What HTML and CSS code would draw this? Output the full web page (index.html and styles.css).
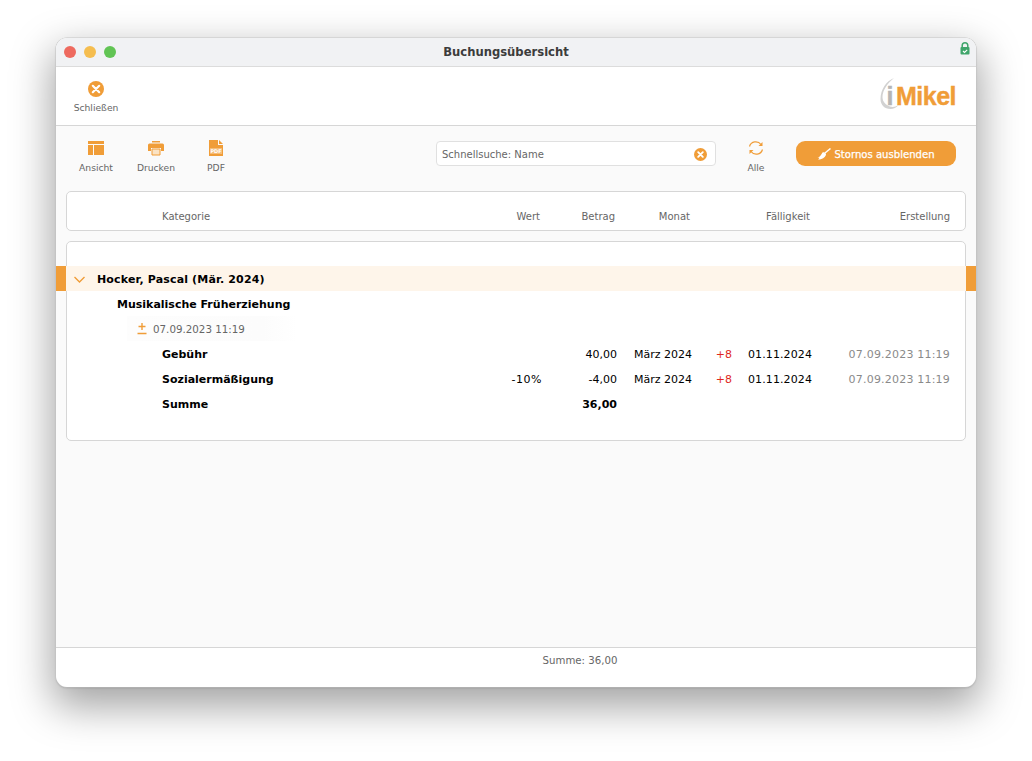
FILE: index.html
```html
<!DOCTYPE html>
<html lang="de">
<head>
  <meta charset="UTF-8">
  <title>Buchungsübersicht</title>
  <link rel="stylesheet" href="styles.css">
</head>
<body>
  <div class="window">
    <div class="titlebar">
      <div class="lights"><span class="red"></span><span class="yellow"></span><span class="green"></span></div>
      <div class="title">Buchungsübersicht</div>
      <svg class="lock" width="10" height="13" viewBox="0 0 10 13">
        <path d="M2.200 6V3.600a2.800 2.800 0 0 1 5.600 0V6" fill="none" stroke="#3fa56b" stroke-width="1.500"/>
        <rect x="0.500" y="5" width="9" height="7.500" rx="1" fill="#3fa56b"/>
        <path d="M3 9l1.500 1.400L7.200 7.800" fill="none" stroke="#fff" stroke-width="1.100"/>
      </svg>
    </div>

    <div class="topbar">
      <div class="tool close-tool">
        <svg width="18" height="18" viewBox="0 0 18 18">
          <circle cx="9" cy="9" r="8" fill="#f09d38"/>
          <path d="M5.800 5.800l6.400 6.400M12.200 5.800l-6.400 6.400" stroke="#fff" stroke-width="2.200" stroke-linecap="round"/>
        </svg>
        <span>Schließen</span>
      </div>
      <div class="logo">
        <svg class="swoosh" width="26" height="36" viewBox="0 0 26 36">
          <path d="M15 0C7 3 1.500 12 1.500 21c0 6 4 10 10 10 3 0 6-1.500 8-4-3 2-6 2.500-8.500 1.500C7 27 3.500 24 3.500 19 3.500 12 9 5 15 0z" fill="#d2d2d2"/>
        </svg>
        <span class="logo-i">i</span><span class="logo-text">Mikel</span>
      </div>
    </div>

    <div class="content">
      <div class="actions">
        <div class="tools">
          <div class="tool">
            <svg width="18" height="16" viewBox="0 0 18 16">
              <path d="M1 1h16v3H1zM1 5h5v10H1zM7 5h10v10H7z" fill="#f09d38"/>
            </svg>
            <span>Ansicht</span>
          </div>
          <div class="tool">
            <svg width="18" height="16" viewBox="0 0 18 16">
              <path d="M5 1h8v1.500H5zM2.500 3.500h13A1.500 1.500 0 0 1 17 5v6h-3V8H4v3H1V5a1.500 1.500 0 0 1 1.500-1.500z" fill="#f09d38"/>
              <path d="M5 9h8v6H5z" fill="#fbe3c4" stroke="#f09d38"/>
            </svg>
            <span>Drucken</span>
          </div>
          <div class="tool">
            <svg width="18" height="16" viewBox="0 0 18 16">
              <path d="M2 0h9v5h5v11H2z" fill="#f09d38"/>
              <path d="M12 0l4 4h-4z" fill="#f09d38"/>
              <rect x="3" y="8" width="12" height="6" fill="#f6bd78"/>
              <text x="9" y="13" class="pdf-mark">PDF</text>
            </svg>
            <span>PDF</span>
          </div>
        </div>
        <div class="search">
          <span>Schnellsuche: Name</span>
          <svg width="13" height="13" viewBox="0 0 18 18">
            <circle cx="9" cy="9" r="9" fill="#f09d38"/>
            <path d="M5.800 5.800l6.400 6.400M12.200 5.800l-6.400 6.400" stroke="#fff" stroke-width="2.600" stroke-linecap="round"/>
          </svg>
        </div>
        <div class="tool all-tool">
          <svg width="18" height="16" viewBox="0 0 18 16">
            <path d="M2.500 6.500A6.500 6.500 0 0 1 14 4.500M15.500 9.500A6.500 6.500 0 0 1 4 11.500" fill="none" stroke="#f09d38" stroke-width="1.200"/>
            <path d="M15.500 2v4h-4zM2.500 14v-4h4z" fill="#f09d38"/>
          </svg>
          <span>Alle</span>
        </div>
        <button class="storno">
          <svg width="14" height="12" viewBox="0 0 14 12">
            <path d="M13.500 0.500L8 5" stroke="#fff" stroke-width="1.500"/>
            <path d="M5.500 4.500c2-.8 3.500.5 3.500 2.200C8 9.500 5 11.500 1 11.500c1-.7 1.300-1.300 1.300-1.800-.6.200-1.200.2-1.800.1C3 8.800 4 7 5.500 4.500z" fill="#fff"/>
          </svg>
          Stornos ausblenden
        </button>
      </div>

      <div class="panel header-panel">
        <div class="row head">
          <span class="c-name">Kategorie</span>
          <span>Wert</span>
          <span>Betrag</span>
          <span>Monat</span>
          <span>Fälligkeit</span>
          <span>Erstellung</span>
        </div>
      </div>

      <div class="panel list-panel">
        <div class="group">
          <svg class="chevron" width="11" height="7" viewBox="0 0 11 7">
            <path d="M0.500 1l5 5 5-5" fill="none" stroke="#f09d38" stroke-width="1.400"/>
          </svg>
          Hocker, Pascal (Mär. 2024)
        </div>
        <div class="course">Musikalische Früherziehung</div>
        <div class="stamp">
          <svg width="10" height="13" viewBox="0 0 10 13">
            <path d="M5 1v7M1.500 4.500h7M0.500 11.500h9" stroke="#f09d38" stroke-width="1.400"/>
          </svg>
          07.09.2023 11:19
        </div>
        <div class="row data">
          <span class="c-name strong">Gebühr</span>
          <span></span>
          <span>40,00</span>
          <span>März 2024</span>
          <span class="c-plus">+8</span>
          <span class="c-date">01.11.2024</span>
          <span class="c-erst">07.09.2023 11:19</span>
        </div>
        <div class="row data">
          <span class="c-name strong">Sozialermäßigung</span>
          <span class="c-wert">-10%</span>
          <span>-4,00</span>
          <span>März 2024</span>
          <span class="c-plus">+8</span>
          <span class="c-date">01.11.2024</span>
          <span class="c-erst">07.09.2023 11:19</span>
        </div>
        <div class="row data">
          <span class="c-name strong">Summe</span>
          <span></span>
          <span class="strong">36,00</span>
        </div>
      </div>
    </div>

    <div class="footer">Summe: 36,00</div>
  </div>
</body>
</html>
```

FILE: styles.css
```css
html, body {
  height: 100%;
}
body {
  margin: 0;
  background: #fff;
  font-family: "DejaVu Sans", sans-serif;
  font-size: 11px;
  color: #000;
  padding: 38px 56px 0;
  box-sizing: border-box;
  overflow: hidden;
}
.window {
  width: 920px;
  height: 649px;
  border-radius: 11px;
  overflow: hidden;
  display: flex;
  flex-direction: column;
  background: #fff;
  box-shadow: 0 0 0 0.5px #c8c8c8, 0 1px 2px rgba(0, 0, 0, 0.2), 0 16px 40px 4px rgba(0, 0, 0, 0.36);
}
.titlebar {
  height: 29px;
  flex: none;
  background: #f1f2f4;
  border-bottom: 1px solid #dcdcdc;
  box-sizing: border-box;
  display: flex;
  align-items: center;
  position: relative;
}
.lights {
  display: flex;
  gap: 8px;
  padding-left: 8px;
}
.lights span {
  width: 12px;
  height: 12px;
  border-radius: 50%;
}
.lights .red { background: #ee6a5f; }
.lights .yellow { background: #f5bd4f; }
.lights .green { background: #61c454; }
.title {
  position: absolute;
  left: 0;
  right: 20px;
  text-align: center;
  font-size: 11.600px;
  font-weight: bold;
  color: #3c3c3c;
}
.lock {
  position: absolute;
  right: 6px;
  top: 4px;
}
.topbar {
  height: 59px;
  flex: none;
  display: flex;
  justify-content: space-between;
  border-bottom: 1px solid #d6d6d6;
  box-sizing: border-box;
}
.tool {
  display: flex;
  flex-direction: column;
  align-items: center;
  color: #666;
  font-size: 9.200px;
}
.close-tool {
  width: 80px;
  padding-top: 13px;
  gap: 4px;
}
.logo {
  position: relative;
  width: 78px;
  margin: 11px 20px 0 0;
  height: 36px;
  display: flex;
  align-items: center;
  justify-content: flex-end;
  font-family: "Liberation Sans", sans-serif;
  font-weight: bold;
  font-size: 25px;
  letter-spacing: -0.5px;
  -webkit-text-stroke: 0.4px;
}
.swoosh {
  position: absolute;
  left: 1px;
  top: 0;
}
.logo-i {
  color: #b5b5b5;
  margin-right: 3px;
  position: relative;
}
.logo-text {
  color: #f09d38;
  position: relative;
}
.content {
  flex: 1;
  background: #fafafa;
  padding: 0 10px;
  display: flex;
  flex-direction: column;
}
.actions {
  height: 65px;
  flex: none;
  display: flex;
  align-items: flex-start;
}
.tools {
  display: flex;
  padding-top: 14px;
  width: 370px;
}
.tools .tool {
  width: 60px;
  gap: 6px;
}
.pdf-mark {
  font-size: 5px;
  font-weight: bold;
  fill: #fff;
  text-anchor: middle;
}
.search {
  width: 280px;
  height: 25px;
  margin-top: 15px;
  background: #fff;
  border: 1px solid #e0e0e0;
  border-radius: 4px;
  display: flex;
  align-items: center;
  justify-content: space-between;
  padding: 1px 8px 0 5px;
  box-sizing: border-box;
  color: #666;
  font-size: 10px;
}
.all-tool {
  width: 80px;
  padding-top: 14px;
  gap: 6px;
}
.storno {
  width: 160px;
  height: 25px;
  margin: 15px 0 0 0;
  background: #f09d38;
  border: none;
  border-radius: 9px;
  color: #fff;
  font-family: inherit;
  font-size: 10.100px;
  -webkit-text-stroke: 0.25px #fff;
  display: flex;
  align-items: center;
  justify-content: center;
  gap: 3px;
  padding: 1px 0 0;
}
.panel {
  background: #fff;
  border: 1px solid #d6d6d6;
  border-radius: 5px;
  box-sizing: border-box;
}
.header-panel {
  height: 40px;
  margin-bottom: 10px;
}
.list-panel {
  height: 200px;
  padding-top: 24px;
}
.row {
  display: grid;
  align-items: center;
}
.row span {
  text-align: right;
  white-space: nowrap;
}
.row .c-name {
  text-align: left;
  padding-left: 95px;
}
.head {
  height: 100%;
  color: #666;
  font-size: 10px;
  grid-template-columns: 400px 73px 75px 75px 120px 140px;
  box-sizing: border-box;
  align-items: start;
  padding-top: 19px;
}
.data {
  height: 25px;
  padding-top: 1px;
  box-sizing: border-box;
  grid-template-columns: 400px 75px 75px 75px 40px 80px 138px;
}
.data .c-plus { color: #e0281e; }
.data .c-wert { letter-spacing: 0.5px; }
.data .c-date { letter-spacing: 0.1px; }
.data .c-erst {
  color: #8a8a8a;
  letter-spacing: 0.2px;
}
.strong { font-weight: bold; }
.group {
  height: 25px;
  margin: 0 -11px;
  padding: 1px 0 0 31px;
  background: #fef5ea;
  border-left: 10px solid #f09d38;
  border-right: 10px solid #f09d38;
  display: flex;
  align-items: center;
  font-weight: bold;
  letter-spacing: 0.15px;
  position: relative;
  box-sizing: border-box;
}
.chevron {
  position: absolute;
  left: 8px;
  top: 10px;
}
.course {
  height: 25px;
  padding: 1px 0 0 50px;
  box-sizing: border-box;
  display: flex;
  align-items: center;
  font-weight: bold;
}
.stamp {
  height: 25px;
  margin-left: 60px;
  width: 160px;
  padding-left: 10px;
  display: flex;
  align-items: center;
  gap: 6px;
  color: #666;
  font-size: 10.300px;
  background: linear-gradient(90deg, #fdfdfd, #fcfcfc 80%, #fff);
}
.footer {
  height: 40px;
  flex: none;
  border-top: 1px solid #d6d6d6;
  box-sizing: border-box;
  padding: 7px 0 0 128px;
  text-align: center;
  color: #666;
  font-size: 10.200px;
}
```
